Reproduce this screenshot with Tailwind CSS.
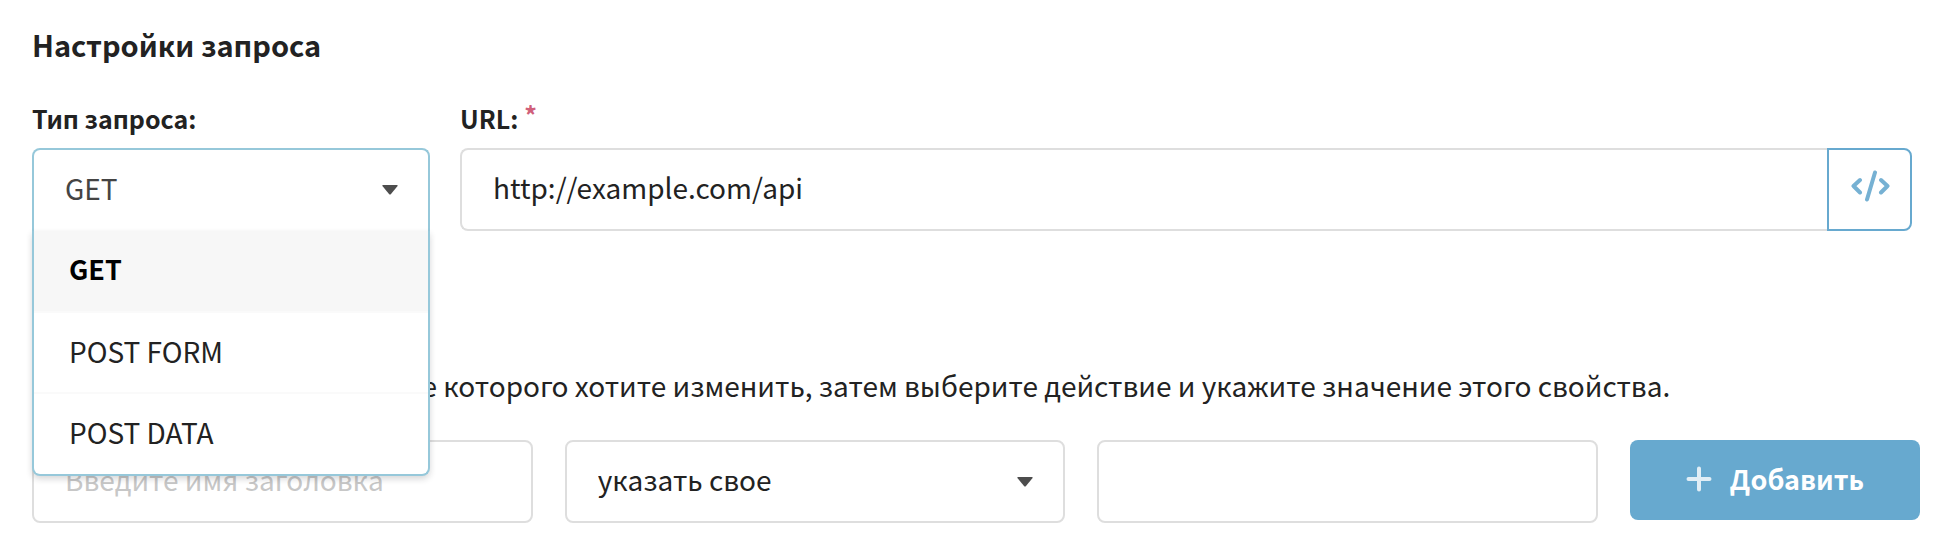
<!DOCTYPE html>
<html lang="ru">
<head>
    <meta charset="UTF-8">
    <meta name="viewport" content="width=device-width, initial-scale=1.0">
    <script src="https://cdn.jsdelivr.net/npm/@tailwindcss/browser@4"></script>
    <title>Настройки запроса</title>
</head>
<body class="bg-white text-[#222] font-['Source_Sans_Pro','Noto_Sans_CJK_SC',sans-serif] text-[28px] leading-10">
<form class="pl-8 pr-[29px] pt-6">
    <h2 class="text-[29px] font-semibold leading-10">Настройки запроса</h2>
    <div class="flex gap-[30px] pt-[34px] pr-2">
        <div class="w-[398px] shrink-0">
            <label class="block text-[25px] font-semibold leading-10 pb-[10px]" for="method">Тип запроса:</label>
            <div class="relative">
                <select class="block w-full h-[83px] appearance-none rounded-t-lg border-2 border-b-0 border-[#96c8da] bg-white pl-[31px] pb-[5px] text-[#444] outline-none" id="method">
                    <option>GET</option>
                    <option>POST FORM</option>
                    <option>POST DATA</option>
                </select>
                <svg class="absolute right-8 top-[37px] w-4 h-[10px] pointer-events-none" viewBox="0 0 16 10">
                    <path fill="#4d4d4d" d="M1 0h14q1 0 .6 1L9 9q-1 1-2 0L.4 1Q0 0 1 0z"/>
                </svg>
                <ul class="absolute z-10 top-full inset-x-0 rounded-b-lg border-2 border-t-0 border-[#96c8da] bg-white shadow-[0_3px_6px_rgba(34,36,38,0.18)]" role="listbox" aria-label="Тип запроса">
                    <li class="h-[82px] pl-[35px] pb-1 flex items-center bg-[#f7f7f7] border-b-2 border-[#fafafa] text-[27px] text-black font-semibold" role="option" aria-selected="true">GET</li>
                    <li class="h-[81px] pl-[35px] pb-1 flex items-center border-b-2 border-[#fafafa]" role="option">POST FORM</li>
                    <li class="h-20 pl-[35px] pb-1 flex items-center" role="option">POST DATA</li>
                </ul>
            </div>
        </div>
        <div class="flex-1">
            <label class="flex text-[25px] font-semibold leading-10 pb-[10px]" for="url">URL:<span class="pl-[6px] -mt-1 h-10 text-[#d0607a]">*</span></label>
            <div class="flex">
                <input class="flex-1 min-w-0 h-[83px] rounded-l-lg border-2 border-r-0 border-[#dedede] px-[31px] pb-[5px] outline-none" id="url" type="text" value="http://example.com/api">
                <button class="w-[85px] h-[83px] flex justify-center items-center rounded-r-lg border-2 border-[#67a9cf] pb-2 pl-px" type="button" aria-label="Код">
                    <svg class="w-10 h-8" viewBox="0 0 40 32" fill="none" stroke="#76b1d3" stroke-width="4" stroke-linecap="round" stroke-linejoin="round">
                        <path d="M10 10L3.500 16l6.500 6.500M31 10l6.500 6-6.500 6.500M25 2.500l-8 27"/>
                    </svg>
                </button>
            </div>
        </div>
    </div>
    <p class="mt-[134px] whitespace-nowrap">Выберите свойство значение которого хотите изменить, затем выберите действие и укажите значение этого свойства.</p>
    <div class="flex gap-8 pt-[35px]">
        <div class="flex-1 grid grid-cols-3 gap-8">
            <input class="min-w-0 h-[83px] rounded-lg border-2 border-[#dedede] px-[31px] pb-[5px] placeholder:text-[#c7c7c7]" type="text" placeholder="Введите имя заголовка" aria-label="Имя заголовка">
            <div class="relative">
                <select class="block w-full h-[83px] appearance-none rounded-lg border-2 border-[#dedede] bg-white pl-[31px] pb-[5px]" aria-label="Действие">
                    <option>указать свое</option>
                </select>
                <svg class="absolute right-8 top-[37px] w-4 h-[10px] pointer-events-none" viewBox="0 0 16 10">
                    <path fill="#4d4d4d" d="M1 0h14q1 0 .6 1L9 9q-1 1-2 0L.4 1Q0 0 1 0z"/>
                </svg>
            </div>
            <input class="min-w-0 h-[83px] rounded-lg border-2 border-[#dedede] px-[31px] pb-[5px]" type="text" aria-label="Значение">
        </div>
        <button class="w-[290px] h-20 flex justify-center items-center gap-[18px] rounded-lg bg-[#67a9cf] pb-[3px] text-[27px] text-white font-semibold" type="button">
            <svg class="w-[26px] h-[26px]" viewBox="0 0 26 26" fill="none" stroke="#e1eef6" stroke-width="4" stroke-linecap="round">
                <path d="M13 2.500v21M2.500 13h21"/>
            </svg>
            Добавить
        </button>
    </div>
</form>
</body>
</html>
